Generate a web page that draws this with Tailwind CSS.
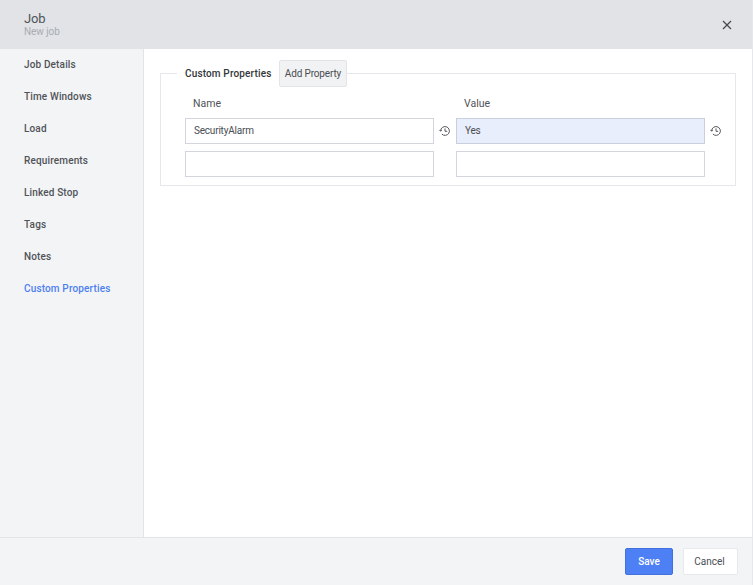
<!DOCTYPE html>
<html lang="en">
<head>
    <meta charset="UTF-8">
    <title>Job</title>
    <script src="https://cdn.jsdelivr.net/npm/@tailwindcss/browser@4"></script>
</head>
<body class="bg-white font-['Roboto','Liberation_Sans',sans-serif] text-[#4a4d52]">
    <div class="flex flex-col h-[585px] w-[753px] overflow-hidden border-r border-[#e6e7ea]">
        <!-- header -->
        <header class="flex items-center justify-between h-[49px] shrink-0 bg-[#e1e3e7] pl-6 pr-[20px]">
            <div class="flex flex-col mt-[-1px]">
                <span class="text-[13px] leading-[15px] tracking-[-0.2px] text-[#505358]">Job</span>
                <span class="text-[10px] leading-[12px] tracking-[-0.05px] text-[#a9acb1]">New job</span>
            </div>
            <button class="w-[10px] h-[10px] text-[#44474b]">
                <svg viewBox="0 0 10 10" class="w-[10px] h-[10px]" fill="none" stroke="currentColor" stroke-width="1.2"><path d="M1 1l8 8M9 1l-8 8"/></svg>
            </button>
        </header>

        <div class="flex flex-1 min-h-0">
            <!-- sidebar -->
            <nav class="w-[144px] shrink-0 bg-[#f3f4f6] border-r border-[#e3e4e8] text-[10px] font-medium tracking-[0.15px]">
                <a class="flex items-center h-8 pl-6 pb-[2px] text-[#505358]">Job Details</a>
                <a class="flex items-center h-8 pl-6 pb-[2px] text-[#505358]">Time Windows</a>
                <a class="flex items-center h-8 pl-6 pb-[2px] text-[#505358]">Load</a>
                <a class="flex items-center h-8 pl-6 pb-[2px] text-[#505358]">Requirements</a>
                <a class="flex items-center h-8 pl-6 pb-[2px] text-[#505358]">Linked Stop</a>
                <a class="flex items-center h-8 pl-6 pb-[2px] text-[#505358]">Tags</a>
                <a class="flex items-center h-8 pl-6 pb-[2px] text-[#505358]">Notes</a>
                <a class="flex items-center h-8 pl-6 pb-[2px] text-[#4d7ff0]">Custom Properties</a>
            </nav>

            <!-- content -->
            <main class="flex-1 pl-4 pr-4 pt-[11px]">
                <fieldset class="w-[576px] h-[126px] border border-[#e6e7ea] pl-6 pr-0">
                    <legend class="flex items-center h-[27px] pl-2 pr-0 ml-[-8px]">
                        <span class="text-[10px] font-medium tracking-[0.15px] text-[#33363a] w-[94px]">Custom Properties</span>
                        <button class="h-[27px] w-[68px] bg-[#f1f2f4] border border-[#e3e4e8] rounded-[2px] text-[10px] tracking-[-0.15px] text-[#4a4d52]">Add Property</button>
                    </legend>
                    <div class="grid grid-cols-[249px_22px_249px_22px] gap-y-[7px] text-[10px] tracking-[-0.2px] pt-[8px]">
                        <label class="h-[17px] pl-2 text-[10.5px] tracking-normal leading-[17px] text-[#505358] mb-[-1px]">Name</label>
                        <span></span>
                        <label class="h-[17px] pl-2 text-[10.5px] tracking-normal leading-[17px] text-[#505358] mb-[-1px]">Value</label>
                        <span></span>

                        <input class="h-[26px] px-2 pb-[2px] border border-[#d3d5de] bg-white outline-none" value="SecurityAlarm">
                        <span class="flex items-center justify-center text-[#55585d]">
                            <svg viewBox="0 0 12 12" class="w-3 h-3" fill="none" stroke="currentColor" stroke-width="1"><path d="M1.6 6a4.4 4.4 0 1 1 1.3 3.1"/><path d="M0.4 4.9l1.2 1.3 1.3-1.2"/><path d="M6 3.4V6.3h2.2"/></svg>
                        </span>
                        <input class="h-[26px] px-2 pb-[2px] border border-[#c9cfdd] bg-[#e8eefb] outline-none" value="Yes">
                        <span class="flex items-center justify-center text-[#55585d]">
                            <svg viewBox="0 0 12 12" class="w-3 h-3" fill="none" stroke="currentColor" stroke-width="1"><path d="M1.6 6a4.4 4.4 0 1 1 1.3 3.1"/><path d="M0.4 4.9l1.2 1.3 1.3-1.2"/><path d="M6 3.4V6.3h2.2"/></svg>
                        </span>

                        <input class="h-[26px] px-2 border border-[#d3d5de] bg-white outline-none">
                        <span></span>
                        <input class="h-[26px] px-2 border border-[#d3d5de] bg-white outline-none">
                        <span></span>
                    </div>
                </fieldset>
            </main>
        </div>

        <!-- footer -->
        <footer class="flex items-center justify-end gap-[10px] h-[48px] shrink-0 bg-[#f3f4f6] border-t border-[#e3e4e8] pr-[14px] text-[10px]">
            <button class="w-[48px] h-[27px] rounded-[2px] bg-[#4d7ff5] border border-[#4270dc] text-white font-medium">Save</button>
            <button class="w-[55px] h-[27px] pr-[2px] rounded-[2px] bg-white border border-[#e8e9ec] text-[#4a4d52]">Cancel</button>
        </footer>
    </div>
</body>
</html>
